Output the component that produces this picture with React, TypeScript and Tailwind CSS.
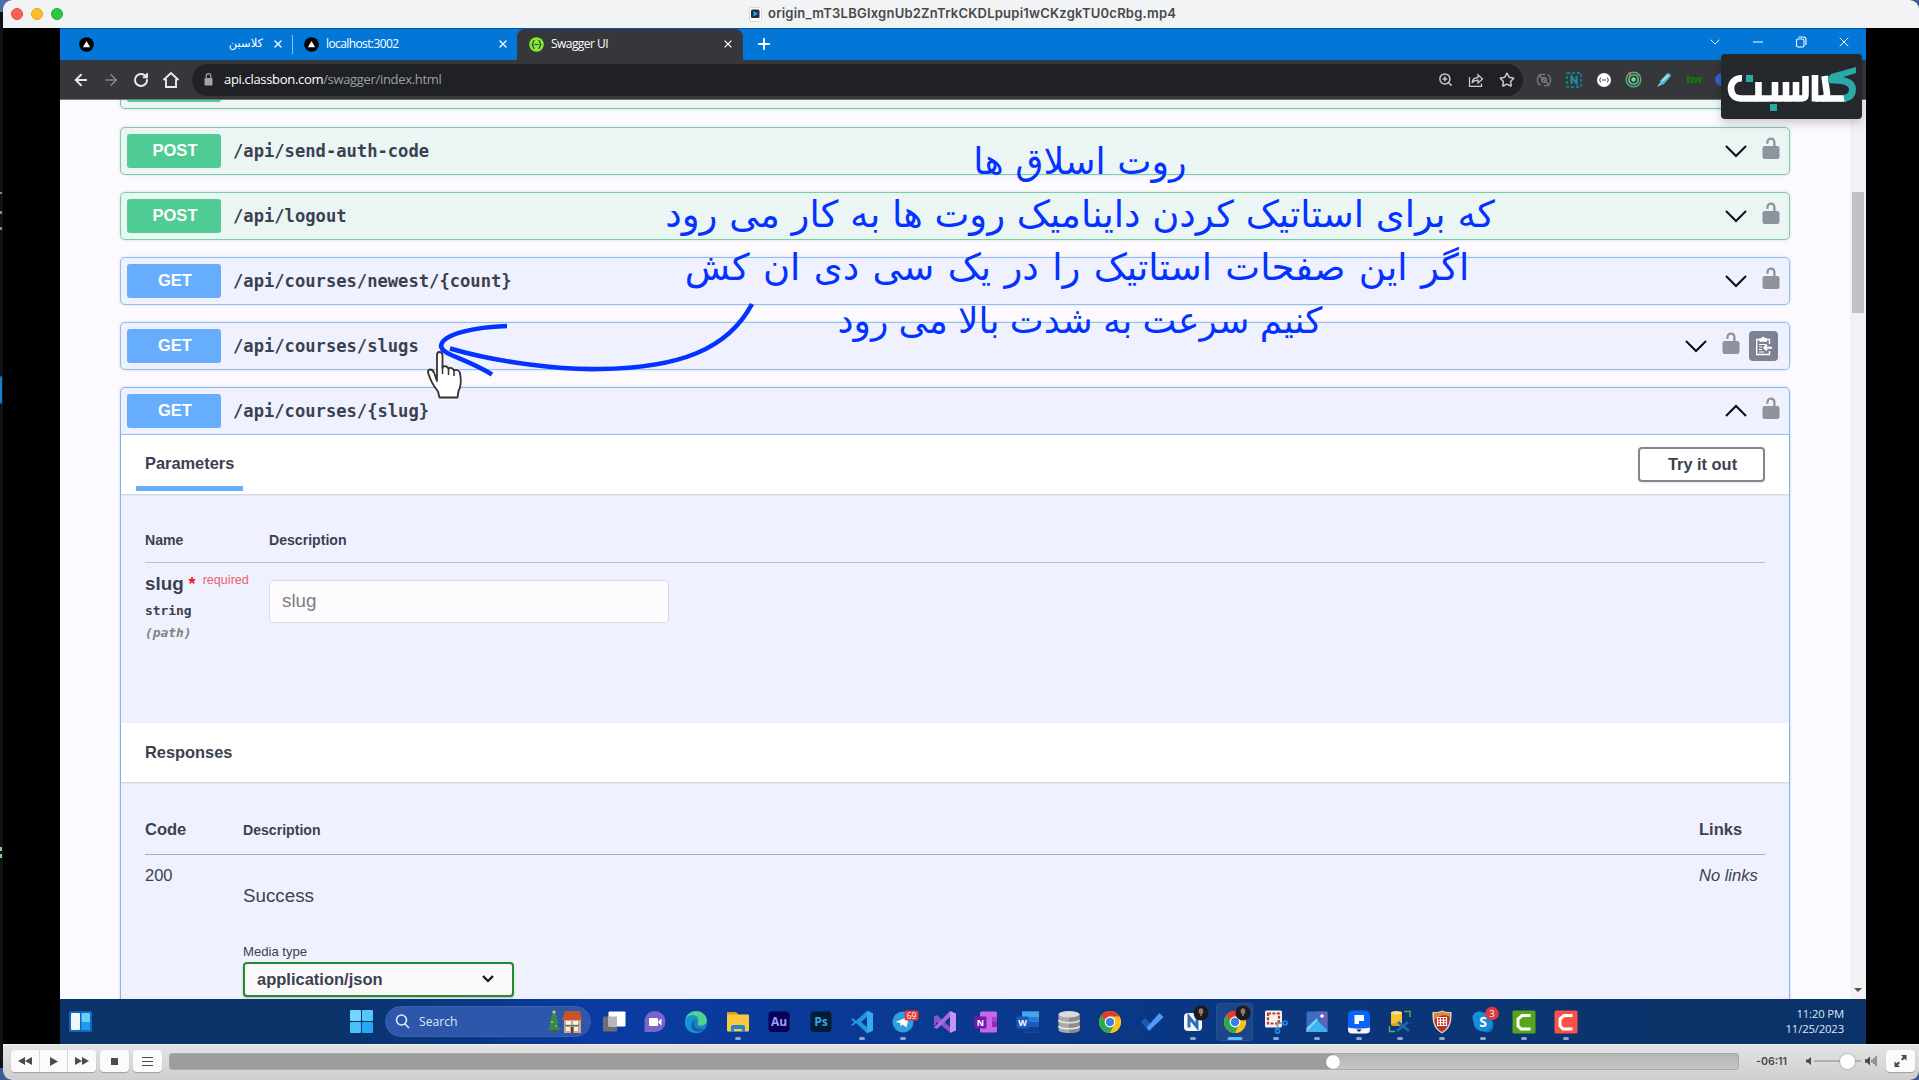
import React from "react";
import {
  ArrowLeft,
  ArrowRight,
  ChevronDown,
  Minus,
  Plus,
  RotateCw,
  Star,
  X,
  ZoomIn,
} from "lucide-react";

/* ---------- small shared drawings ---------- */

function Unlock() {
  return (
    <svg width="18" height="23" viewBox="0 0 18 23">
      <path d="M5.4 6.8C5.1 3.2 6.600 1.600 8.800 1.600c2.400 0 3.600 1.500 3.600 4V10" fill="none" stroke="#8e939c" strokeWidth="2.300" />
      <rect x="0.500" y="9" width="17" height="13" rx="2.200" fill="#8e939c" />
    </svg>
  );
}

function Arrow({ up = false }: { up?: boolean }) {
  return (
    <svg width="22" height="14" viewBox="0 0 22 14" fill="none" stroke="#0b0b12" strokeWidth="2">
      {up ? <path d="M1 12L11 2l10 10" /> : <path d="M1 2l10 10L21 2" />}
    </svg>
  );
}

function VercelMark() {
  return (
    <svg width="15" height="15" viewBox="0 0 15 15" className="shrink-0">
      <circle cx="7.500" cy="7.500" r="7.300" fill="#000" />
      <path d="M7.500 4l3.600 6.300H3.900z" fill="#fff" />
    </svg>
  );
}

/* ---------- browser ---------- */

function TabStrip() {
  return (
    <div className="flex h-8 shrink-0 items-stretch border-t border-[#0055a8] bg-[#0377d8] text-[12px] text-white">
      <div className="flex w-[232px] items-center pb-[1px] pl-[19px]">
        <VercelMark />
        <span className="ml-auto font-['DejaVu_Sans',sans-serif] text-[11.500px]" dir="rtl">كلاسبن</span>
        <X className="mr-[8px] ml-[9px] h-[12px] w-[12px]" strokeWidth={2.600} />
      </div>
      <div className="my-[6px] w-px bg-[#8cc3f0]" />
      <div className="flex max-w-[224px] flex-1 items-center pb-[1px] pl-[11px]">
        <VercelMark />
        <span className="ml-[7px] font-['Open_Sans',sans-serif] tracking-[-0.600px]">localhost:3002</span>
        <X className="mr-[8px] ml-auto h-[12px] w-[12px]" strokeWidth={2.600} />
      </div>
      <div className="flex w-[226px] items-center rounded-t-lg bg-[#36373b] pb-[1px] pl-[12px]">
        <svg width="15" height="15" viewBox="0 0 15 15">
          <circle cx="7.500" cy="7.500" r="7.300" fill="#85ea2d" />
          <path d="M5.500 3.500c-2 0-.8 2.800-2.200 4 1.400 1.200.2 4 2.200 4M9.500 3.500c2 0 .8 2.800 2.200 4-1.400 1.200-.2 4-2.200 4M5.500 7.500h4" fill="none" stroke="#173647" strokeWidth="1.100" />
        </svg>
        <span className="ml-[7px] font-['Open_Sans',sans-serif] tracking-[-0.550px]">Swagger UI</span>
        <X className="mr-[9px] ml-auto h-[12px] w-[12px]" strokeWidth={2.200} />
      </div>
      <Plus className="mb-[1px] ml-[12px] h-[18px] w-[18px] self-center" strokeWidth={2.400} />
      <div className="ml-auto flex items-center gap-[27px] pr-[14px] pb-[6px]">
        <ChevronDown className="h-4 w-4" strokeWidth={1.500} />
        <Minus className="h-4 w-4" strokeWidth={1.500} />
        <svg width="16" height="16" viewBox="0 0 16 16" fill="none" stroke="#fff" strokeWidth="1.100">
          <rect x="3.500" y="5" width="7.500" height="8" rx="1.500" />
          <path d="M5.500 3h5c1.500 0 2.500 1 2.500 2.500V11" />
        </svg>
        <X className="h-4 w-4" strokeWidth={1.500} />
      </div>
    </div>
  );
}

function Toolbar() {
  return (
    <div className="flex h-10 shrink-0 items-center border-b border-[#77757c] bg-[#36373b] text-[#e8eaed]">
      <div className="flex w-[132px] items-center pl-[12px]">
        <ArrowLeft className="h-[18px] w-[18px]" strokeWidth={2.500} />
        <ArrowRight className="ml-[12px] h-[18px] w-[18px] text-[#85878b]" strokeWidth={2} />
        <RotateCw className="ml-[13px] h-[16px] w-[16px]" strokeWidth={3} />
        <svg width="18" height="18" viewBox="0 0 18 18" className="ml-[13px]" fill="none" stroke="currentColor" strokeWidth="1.900">
          <path d="M1.500 9L9 2l7.500 7M4 8v8h10V8" />
        </svg>
      </div>
      <div className="flex h-8 w-[1331px] items-center rounded-full bg-[#202124] pl-[12px]">
        <svg width="9" height="13" viewBox="0 0 9 13">
          <rect x="0.500" y="5" width="8" height="7.500" rx="1" fill="#a0a4aa" />
          <path d="M2.200 5V3a2.300 2.300 0 0 1 4.600 0v2" fill="none" stroke="#a0a4aa" strokeWidth="1.200" />
        </svg>
        <span className="ml-[11px] font-['Open_Sans',sans-serif] text-[13px] tracking-[-0.320px] whitespace-nowrap text-[#9aa0a6]">
          <span className="text-white">api.classbon.com</span>/swagger/index.html
        </span>
        <div className="ml-auto flex items-center gap-[15px] pr-[8px] text-[#c7c9cc]">
          <ZoomIn className="h-[15px] w-[15px]" strokeWidth={2.400} />
          <svg width="16" height="16" viewBox="0 0 16 16" fill="none" stroke="currentColor" strokeWidth="1.300">
            <path d="M1.500 5v9.300h12V11.500M4 11c.5-4 3-5.500 6-5.500V2.700L14.500 7 10 11V8.200c-2.500 0-4.500.6-6 2.800z" />
          </svg>
          <Star className="h-[16px] w-[16px]" strokeWidth={2.200} />
        </div>
      </div>
      <div className="flex items-center gap-[13.800px] pl-[13px]">
        <svg width="16" height="16" viewBox="0 0 16 16" fill="none" stroke="#77797d" strokeWidth="1.400">
          <path d="M4.500 13.500A6.300 6.300 0 0 1 5 2.400h4M11.500 2.500A6.300 6.300 0 0 1 11 13.600H8M2.500 2.500l11 11" />
          <circle cx="8" cy="8" r="2.300" />
        </svg>
        <svg width="16" height="16" viewBox="0 0 16 16" fill="none" stroke="#1493a2">
          <rect x="1" y="1" width="14" height="14" strokeDasharray="3 2" strokeWidth="1.300" />
          <path d="M5.500 12V4.500l5 7V4" strokeWidth="2" />
        </svg>
        <svg width="16" height="16" viewBox="0 0 16 16">
          <circle cx="8" cy="8" r="7" fill="#fff" />
          <path d="M5 5.500L3.500 8 5 10.500M11 5.500L12.500 8 11 10.500M6 8h4" fill="none" stroke="#444" strokeWidth="1" />
        </svg>
        <svg width="17" height="17" viewBox="0 0 17 17" fill="none">
          <circle cx="8.500" cy="8.500" r="7.300" stroke="#46b980" strokeWidth="1.400" />
          <circle cx="8.500" cy="8.500" r="4.700" stroke="#7bd7a2" strokeWidth="1.300" />
          <circle cx="8.500" cy="8.500" r="2.200" fill="#59e2a0" />
          <circle cx="4.500" cy="2.800" r="1.600" fill="#e2663c" />
          <circle cx="12.500" cy="4.500" r="1.200" fill="#c9643f" />
        </svg>
        <svg width="16" height="16" viewBox="0 0 16 16">
          <path d="M1 15l3-4 2 1z" fill="#cfeaf4" />
          <path d="M4 9l7-7.500c2-1 4.500 1 3.500 3L7.500 12.500 4 12z" fill="#56b9de" />
          <path d="M5.500 8.500l6-6 1.500 1-6 6z" fill="#a5e3f5" />
        </svg>
        <span className="w-[17px] font-['DejaVu_Sans',sans-serif] text-[11px] leading-4 font-bold tracking-[-1px] text-[#0d7a0d]">bw</span>
        <div className="-ml-[2px] h-[13px] w-[13px] rounded-full bg-[#2f63c4]" />
      </div>
    </div>
  );
}

/* ---------- swagger page ---------- */

type Route = { method: "POST" | "GET"; path: string; copy?: boolean };

const routes: Route[] = [
  { method: "POST", path: "/api/send-auth-code" },
  { method: "POST", path: "/api/logout" },
  { method: "GET", path: "/api/courses/newest/{count}" },
  { method: "GET", path: "/api/courses/slugs", copy: true },
];

function Summary({ route, open = false }: { route: Route; open?: boolean }) {
  return (
    <div className="flex h-[46px] items-center pl-[6px]">
      <div
        className={
          "flex h-[34px] w-[94px] items-center justify-center rounded-[3px] pb-[1px] pl-[2px] font-['Liberation_Sans',sans-serif] text-[16.500px] font-bold text-white " +
          (route.method === "POST" ? "bg-[#4fcc93]" : "bg-[#66aefd]")
        }
      >
        {route.method}
      </div>
      <span className="ml-[12px] pt-[2px] font-['DejaVu_Sans_Mono',monospace] text-[17.150px] font-bold text-[#3b4151]">
        {route.path}
      </span>
      <div className="ml-auto flex items-center">
        <Arrow up={open} />
        <div className="mr-[9px] ml-[15px] pb-[5px]">
          <Unlock />
        </div>
        {route.copy && (
          <div className="mr-[11px] flex h-[30px] w-[29px] items-center justify-center rounded-[4px] bg-[#7d8293]">
            <svg width="18" height="20" viewBox="0 0 18 20" fill="none" stroke="#fff" strokeWidth="1.400">
              <path d="M14.500 8V3.500H1.700v15h12.800V15M5 5V3h1.700c.3-2 2.500-2 2.800 0h1.800v2z" />
              <path d="M4 8.500h7M4 11h3M4 13.500h3M4 16h5" strokeWidth="1" />
              <path d="M17 11.700H9.500M12 9l-2.800 2.700L12 14.400" strokeWidth="2" />
            </svg>
          </div>
        )}
      </div>
    </div>
  );
}

function SwaggerPage() {
  return (
    <div className="flex h-[899px] shrink-0 overflow-hidden bg-[#fcfafe] font-['Liberation_Sans',sans-serif] text-[#3b4151]">
      <div className="w-[1790px] pl-[60px]">
        <div className="w-[1670px]">
          <div className="h-[9px] rounded-b-[5px] border border-t-0 border-[#6cc9a0] bg-[#ebf6f4] pl-[6px] shadow-[0_0_3px_rgba(0,0,0,0.150)]">
            <div className="h-[2px] w-[94px] rounded-b-[3px] bg-[#4fcc93]" />
          </div>
          <div className="mt-[18px] flex flex-col gap-[17px]">
            {routes.map((r) => (
              <div
                key={r.path}
                className={
                  "rounded-[5px] border shadow-[0_0_3px_rgba(0,0,0,0.150)] " +
                  (r.method === "POST" ? "border-[#77cfa5] bg-[#ebf6f4]" : "border-[#8cbff5] bg-[#eff2fe]")
                }
              >
                <Summary route={r} />
              </div>
            ))}
            <div className="h-[700px] rounded-[5px] border border-[#7fb8f5] bg-[#eff2fe] shadow-[0_0_3px_rgba(0,0,0,0.150)]">
              <Summary route={{ method: "GET", path: "/api/courses/{slug}" }} open />
              <div className="flex h-[60px] items-start justify-between border-t border-[#8cc0f8] bg-white pr-[24px] pl-[15px] shadow-[0_1px_2px_rgba(0,0,0,0.150)]">
                <div className="h-[56px] w-[107px] border-b-[5px] border-[#66aefd] pt-[18px] pl-[9px] text-[16.400px] leading-5 font-bold">
                  Parameters
                </div>
                <div className="mt-[12px] flex h-[35px] w-[127px] items-center justify-center rounded-[4px] border-2 border-[#85868c] pb-[1px] pl-[2px] text-[16.400px] font-bold shadow-[0_1px_2px_rgba(0,0,0,0.100)]">
                  Try it out
                </div>
              </div>
              <div className="h-[229px] px-6 pt-[36px]">
                <div className="flex border-b border-[#bcc0cc] pb-[12px] text-[14.100px] leading-5 font-bold">
                  <div className="w-[124px]">Name</div>
                  <div>Description</div>
                </div>
                <div className="flex">
                  <div className="w-[124px] pt-[9px]">
                    <div className="flex h-6 text-[18.800px] leading-6 font-bold whitespace-nowrap">
                      slug
                      <span className="ml-[5px] text-[18px] leading-6 text-[#f11c1c]">*</span>
                      <span className="ml-[7px] text-[12.600px] leading-[17px] font-normal text-[#f0606a]">required</span>
                    </div>
                    <div className="mt-[5px] font-['DejaVu_Sans_Mono',monospace] text-[12.900px] leading-5 font-bold">string</div>
                    <div className="mt-[2px] font-['DejaVu_Sans_Mono',monospace] text-[12.900px] leading-5 font-bold text-[#808080] italic">(path)</div>
                  </div>
                  <div className="mt-[17px] flex h-[43px] w-[400px] items-center rounded-[4px] border border-[#dadbe5] bg-[#fdfbfe] pl-[12px] text-[18.800px] text-[#7d7d80]">
                    slug
                  </div>
                </div>
              </div>
              <div className="flex h-[59px] items-center bg-white pl-6 text-[16.400px] font-bold shadow-[0_1px_2px_rgba(0,0,0,0.150)]">
                Responses
              </div>
              <div className="px-6 pt-[37px]">
                <div className="flex border-b border-[#a9aebb] pb-[15px] text-[16.500px] leading-5 font-bold">
                  <div className="w-[98px]">Code</div>
                  <div className="pt-[2px] text-[14.100px] leading-[18px]">Description</div>
                  <div className="ml-auto w-[66px]">Links</div>
                </div>
                <div className="flex">
                  <div className="w-[98px] pt-[10px] text-[16.500px] leading-5">200</div>
                  <div className="pt-[29px]">
                    <div className="text-[18.800px] leading-6">Success</div>
                    <div className="mt-[34px] text-[13.100px] leading-5">Media type</div>
                    <div className="flex h-[35px] w-[271px] items-center justify-between rounded-[4px] border-2 border-[#218c2c] bg-[#fbf9fb] pr-[17px] pl-[12px] pb-[1px] text-[16.500px] font-bold shadow-[0_1px_2px_rgba(0,0,0,0.250)]">
                      application/json
                      <svg width="14" height="10" viewBox="0 0 14 10" fill="none" stroke="#111" strokeWidth="2.200">
                        <path d="M2 2l5 5 5-5" />
                      </svg>
                    </div>
                  </div>
                  <div className="ml-auto w-[66px] pt-[10px] text-[16.500px] leading-5 whitespace-nowrap italic">No links</div>
                </div>
              </div>
            </div>
          </div>
        </div>
      </div>
      <div className="flex w-4 flex-col items-center bg-[#f3f1f5]">
        <div className="mt-[92px] h-[121px] w-[12px] bg-[#c3c1c5]" />
        <div className="mt-auto mb-[7px] h-0 w-0 border-x-[4px] border-t-[4px] border-x-transparent border-t-[#555]" />
      </div>
    </div>
  );
}

/* ---------- windows taskbar ---------- */

function Ico({ children }: { children: React.ReactNode }) {
  return (
    <svg width="24" height="24" viewBox="0 0 24 24">
      {children}
    </svg>
  );
}

function Chrome() {
  return (
    <>
      <circle cx="12" cy="12" r="11" fill="#fbc116" />
      <path d="M12 12L2.500 6.500A11 11 0 0 1 21.500 6.500z" fill="#e33b2e" />
      <path d="M12 12L2.500 6.500A11 11 0 0 0 12 23l4.300-8.500z" fill="#2da94f" />
      <path d="M12 6.500h9.500A11 11 0 0 1 12 23l5-9z" fill="#fbc116" />
      <circle cx="12" cy="12" r="5.400" fill="#fff" />
      <circle cx="12" cy="12" r="4.200" fill="#3f7de8" />
    </>
  );
}

function Avatar() {
  return (
    <>
      <circle cx="20" cy="3" r="7.500" fill="#1c1a1d" />
      <ellipse cx="20" cy="1.200" rx="2.300" ry="3" fill="#8f7a73" />
      <path d="M18.800 4.500l1.200 2 1.200-2z" fill="#aaa" />
    </>
  );
}

type TaskbarApp = { icon: React.ReactNode; run?: "idle" | "active" };

const apps: TaskbarApp[] = [
  {
    icon: (
      <>
        <rect x="1" y="6.500" width="14" height="15" rx="1" fill="#6c6d72" />
        <rect x="6.500" y="1.500" width="17" height="15" rx="1" fill="#fff" />
        <rect x="6.500" y="6.500" width="8.500" height="10" fill="#b6b7bb" />
      </>
    ),
  },
  {
    icon: (
      <>
        <path d="M12 1a10.500 10.500 0 0 1 0 21H1.500V12A10.500 10.500 0 0 1 12 1z" fill="#7a63cb" />
        <rect x="6" y="8" width="9" height="8" rx="1" fill="#fff" />
        <path d="M15.500 11l3-2.500v7l-3-2.500z" fill="#fff" />
      </>
    ),
  },
  {
    icon: (
      <>
        <circle cx="12" cy="12" r="11.200" fill="#1b7fd1" />
        <path d="M1.500 9C4 .5 17-2 22 7c3 7-3 9.500-7 8.500-2-.7-1-2-.8-3.500C14 7 6 5.500 1.500 9z" fill="#4fd38c" />
        <path d="M1.500 9C5 3 14 4 14.500 9.500 11 7 8 11 9.500 15c2 5.500 8 6 11.500 3.500C16 26 2 24 1 13z" fill="#1596cf" />
        <path d="M11 10c-4 4 0 11 9.500 9-4 4.500-14 3-13-4 .3-2.500 1.500-4 3.500-5z" fill="#135ba8" />
      </>
    ),
  },
  {
    icon: (
      <>
        <path d="M1 2h9l2 2v6H1z" fill="#e09b10" />
        <rect x="1" y="4.500" width="22" height="17" rx="1" fill="#fdc93c" />
        <path d="M5 22v-5a2 2 0 0 1 2-2h10a2 2 0 0 1 2 2v5h-3v-3H8v3z" fill="#1b8ad2" />
      </>
    ),
    run: "idle",
  },
  {
    icon: (
      <>
        <rect x="1.500" y="1.500" width="21" height="20.500" rx="3.500" fill="#060057" />
        <text x="12" y="16" textAnchor="middle" fontSize="12" fontWeight="700" fontFamily="Open Sans, sans-serif" fill="#a59bf5">Au</text>
      </>
    ),
  },
  {
    icon: (
      <>
        <rect x="1.500" y="1.500" width="21" height="20.500" rx="3.500" fill="#001d34" />
        <text x="12" y="16" textAnchor="middle" fontSize="12" fontWeight="700" fontFamily="Open Sans, sans-serif" fill="#35a5f5">Ps</text>
      </>
    ),
  },
  {
    icon: (
      <>
        <path d="M17 .8L23 3.500v17L17 23.200 6 13l-3.500 3L1 15l3-3-3-3 1.500-1L6 10.800zM17 7l-6 5 6 5z" fill="#2595db" />
        <path d="M17 .8L23 3.500v17l-6 2.700z" fill="#35abf0" />
      </>
    ),
    run: "idle",
  },
  {
    icon: (
      <>
        <circle cx="12" cy="12" r="10.500" fill="#2ba0dc" />
        <path d="M4.500 12L18 6.500l-2.500 11-4-3-2 2-.3-3.500z" fill="#fff" />
        <rect x="13.500" y=".5" width="14" height="10" rx="2" fill="#e53935" />
        <text x="20.500" y="8.500" textAnchor="middle" fontSize="8.500" fontFamily="Open Sans, sans-serif" fill="#fff">69</text>
      </>
    ),
    run: "idle",
  },
  {
    icon: (
      <>
        <path d="M1 6.500l3-1.500L17 17v5.500L4 12 1 17z" fill="#8d54c8" />
        <path d="M1 17.500L17 1v6L4 19z" fill="#a66be0" />
        <path d="M17 1l6 2.500v17L17 23z" fill="#c793f7" />
      </>
    ),
  },
  {
    icon: (
      <>
        <rect x="6" y="1.500" width="17" height="21" rx="1.500" fill="#ca64ea" />
        <path d="M18 7h5v5h-5z" fill="#a93fd0" />
        <path d="M18 12h5v5h-5z" fill="#8d2cb5" />
        <rect x=".5" y="6.500" width="12" height="12" rx="1" fill="#7719aa" />
        <text x="6.500" y="15.700" textAnchor="middle" fontSize="9" fontWeight="700" fontFamily="Open Sans, sans-serif" fill="#fff">N</text>
      </>
    ),
  },
  {
    icon: (
      <>
        <rect x="6" y="1.500" width="17" height="21" rx="1.500" fill="#2b7cd3" />
        <path d="M6 1.500h17V7H6z" fill="#41a5ee" />
        <path d="M6 12h17v5H6z" fill="#185abd" />
        <path d="M6 17h17v5.500H6z" fill="#103f91" />
        <rect x=".5" y="6.500" width="12" height="12" rx="1" fill="#185abd" />
        <text x="6.500" y="15.700" textAnchor="middle" fontSize="9" fontWeight="700" fontFamily="Open Sans, sans-serif" fill="#fff">W</text>
      </>
    ),
  },
  {
    icon: (
      <>
        <path d="M1.500 4v16c0 4 21 4 21 0V4z" fill="#a9a9a9" />
        <path d="M12 4h10.500v16c0 2-5 3-10.500 3z" fill="#8c8c8c" />
        <path d="M1.500 10c1 3.500 20 3.500 21 0M1.500 16c1 3.500 20 3.500 21 0" fill="none" stroke="#e8e8e8" strokeWidth="1.500" />
        <ellipse cx="12" cy="4.200" rx="10.500" ry="3.200" fill="#dcdcdc" />
      </>
    ),
  },
  { icon: <Chrome /> },
  {
    icon: (
      <>
        <path d="M1 12l4-4 7 7-4 5.500z" fill="#195abd" />
        <path d="M7 17L19.500 3 23.500 7 9 21z" fill="#4a9df2" />
      </>
    ),
  },
  {
    icon: (
      <>
        <rect x="3" y="3" width="18" height="18" rx="4" fill="#f4f8fc" />
        <path d="M8 17.500V7l8 10V6.500" fill="none" stroke="#2f6cb3" strokeWidth="3" />
        <Avatar />
      </>
    ),
    run: "idle",
  },
  {
    icon: (
      <>
        <Chrome />
        <Avatar />
      </>
    ),
    run: "active",
  },
  {
    icon: (
      <>
        <rect x="1" y="0.500" width="17" height="17" rx="1.500" fill="#f3f3f5" />
        <rect x="4" y="3.500" width="11" height="10" fill="none" stroke="#c43a28" strokeWidth="2.200" strokeDasharray="3 1.400" />
        <path d="M12 14l8-1.500M14 10l-1 10" stroke="#8c9299" strokeWidth="1.700" />
        <circle cx="21" cy="13" r="2" fill="none" stroke="#1d8fe0" strokeWidth="1.700" />
        <circle cx="13.500" cy="21" r="2" fill="none" stroke="#1d8fe0" strokeWidth="1.700" />
      </>
    ),
    run: "idle",
  },
  {
    icon: (
      <>
        <rect x="1.500" y="1.500" width="21" height="20.500" rx="2" fill="#3d6fc0" />
        <path d="M13 1.500h9.500V20z" fill="#6a61b5" />
        <path d="M1.500 20.500l10-11 11 11V22h-21z" fill="#3fb2f0" />
        <path d="M1.500 22L13 10l-1.500-1.500L1.500 18z" fill="#7cd4fa" />
        <circle cx="17" cy="6" r="1.800" fill="#fff" />
      </>
    ),
    run: "idle",
  },
  {
    icon: (
      <>
        <rect x="1" y="0.500" width="22" height="23" rx="4.500" fill="#0a63fb" />
        <path d="M1 17.500c6 1.500 16 1.500 22 0v2a4 4 0 0 1-4 4H5a4 4 0 0 1-4-4z" fill="#f4f6fa" />
        <path d="M7.500 5h9.500v6h-5v3H7.500z" fill="#fff" />
        <path d="M9.500 19.500h5l-1.500 2h-2z" fill="#222" />
      </>
    ),
    run: "idle",
  },
  {
    icon: (
      <>
        <path d="M3 2.500h11v12H3z" fill="#f2c230" />
        <ellipse cx="8.500" cy="2.800" rx="5.500" ry="1.800" fill="#fbe28a" />
        <ellipse cx="8.500" cy="14.500" rx="5.500" ry="1.500" fill="#dba717" />
        <path d="M16 1.500h6V7M1.500 16v5.500H7" fill="none" stroke="#59a55a" strokeWidth="1.600" />
        <path d="M9 21l11-9M10 12l11 9" stroke="#1b68ae" strokeWidth="2.600" />
      </>
    ),
    run: "idle",
  },
  {
    icon: (
      <>
        <path d="M12 0.500c3 1.500 6.500 1.700 9.500 1.500.5 11-2 17.500-9.500 21.500C4.500 19.500 2 13 2.500 2 5.500 2.200 9 2 12 .5z" fill="#d8d3cd" />
        <path d="M12 2c2.500 1.200 5.500 1.500 8 1.400C20.300 13 18 18.500 12 22 6 18.500 3.700 13 4 3.400 6.500 3.500 9.500 3.200 12 2z" fill="#bd2f25" />
        <path d="M4 3.400C6.500 3.500 9.500 3.200 12 2c2.500 1.200 5.500 1.500 8 1.400V7C15 4 9 5 4 10z" fill="#e9862e" />
        <path d="M7.500 7.500h9v8h-9zM10.500 7.500v8M13.500 7.500v8M7.500 10.200h9M7.500 12.800h9" fill="none" stroke="#fff" strokeWidth="1.100" />
      </>
    ),
    run: "idle",
  },
  {
    icon: (
      <>
        <circle cx="8" cy="8" r="6.500" fill="#1593dd" />
        <circle cx="16" cy="16" r="6.500" fill="#1173c4" />
        <circle cx="12" cy="12" r="9.500" fill="#168bd8" />
        <text x="12" y="17" textAnchor="middle" fontSize="14" fontWeight="700" fontFamily="Open Sans, sans-serif" fill="#fff">S</text>
        <circle cx="21" cy="3.500" r="6.800" fill="#dc3b40" />
        <text x="21" y="7" textAnchor="middle" fontSize="9.500" fontFamily="Open Sans, sans-serif" fill="#fff">3</text>
      </>
    ),
    run: "idle",
  },
  {
    icon: (
      <>
        <rect x=".5" y=".5" width="23" height="23" rx="1.500" fill="#55a619" />
        <path d="M18.500 5.500H10L6 9v7l3 3h9.500" fill="none" stroke="#fff" strokeWidth="3" />
      </>
    ),
    run: "idle",
  },
  {
    icon: (
      <>
        <rect x=".5" y=".5" width="23" height="23" rx="1.500" fill="#fb5149" />
        <path d="M18.500 5.500H10L6 9v7l3 3h9.500" fill="none" stroke="#fff" strokeWidth="3" />
      </>
    ),
    run: "idle",
  },
];

function Taskbar() {
  return (
    <div className="flex h-[45px] shrink-0 items-center bg-linear-to-r from-[#0b3369] from-15% via-[#0a3ba2] via-30% to-[#0b3369] to-90% font-['Open_Sans',sans-serif]">
      <svg width="23" height="21" viewBox="0 0 23 21" className="ml-[9px]">
        <rect width="23" height="21" rx="1.500" fill="#1267ba" />
        <rect x="2" y="2" width="9" height="17" rx="1" fill="#f1f6fb" />
        <rect x="12.500" y="2" width="8.500" height="9" fill="#69cff9" />
        <rect x="12.500" y="11" width="8.500" height="8" fill="#1f9cf0" />
      </svg>
      <svg width="23" height="23" viewBox="0 0 23 23" className="ml-[258px]">
        <rect width="11" height="11" rx="1" fill="#74d4fb" />
        <rect x="12" width="11" height="11" rx="1" fill="#55c8fb" />
        <rect y="12" width="11" height="11" rx="1" fill="#49c0fa" />
        <rect x="12" y="12" width="11" height="11" rx="1" fill="#27a8f5" />
      </svg>
      <div className="ml-[12px] flex h-[31px] w-[206px] items-center rounded-full border border-[#3a63af] bg-[#2c57ab] pl-[9px]">
        <svg width="15" height="15" viewBox="0 0 15 15" fill="none" stroke="#e4ebf7" strokeWidth="1.600">
          <circle cx="6.500" cy="6" r="5" />
          <path d="M10 10l4 4" />
        </svg>
        <span className="ml-[9px] pt-[1px] text-[12.200px] text-[#dfe6f3]">Search</span>
        <svg width="34" height="23" viewBox="0 0 34 23" className="ml-auto mr-[8px]">
          <path d="M6 1l3.500 6H8l3 6H9l3 7H0l3-7H1l3-6H2.500z" fill="#2d8d4d" />
          <path d="M4.500 20h3v2.500h-3z" fill="#7b4a2c" />
          <circle cx="6" cy="2" r="1.500" fill="#f5d443" />
          <circle cx="4" cy="12" r="1" fill="#f5b443" />
          <circle cx="8" cy="16" r="1" fill="#f08b4b" />
          <path d="M16 9h17v14H16z" fill="#d9a18e" />
          <path d="M17 1h15l2 9H14z" fill="#c4562b" />
          <path d="M18 11h5v4h-5zM25 11h5v4h-5zM18 17h4v4h-4zM26 17h4v4h-4z" fill="#f6f1ea" />
          <path d="M17 15.500h14" stroke="#40824b" strokeWidth="1.300" />
          <path d="M23 17h2.500v6H23z" fill="#6c3b2e" />
        </svg>
      </div>
      <div className="ml-[2px] flex">
        {apps.map((a, i) => (
          <div key={i} className="relative flex h-[38px] w-[41.400px] items-center justify-center">
            {a.run === "active" && <div className="absolute inset-x-[2px] inset-y-0 rounded-[4px] border border-white/5 bg-white/8" />}
            <div className="relative [&>svg]:overflow-visible">
              <Ico>{a.icon}</Ico>
            </div>
            {a.run && (
              <div
                className={
                  "absolute bottom-px left-1/2 h-[3px] -translate-x-1/2 rounded-full " +
                  (a.run === "active" ? "w-[15px] bg-[#58bff8]" : "w-[6px] bg-[#8fa6cf]")
                }
              />
            )}
          </div>
        ))}
      </div>
      <div className="mr-[22px] mb-[1px] ml-auto text-right text-[11.300px] leading-[15px] tracking-[-0.150px] text-[#dce6f5]">
        <div>11:20 PM</div>
        <div>11/25/2023</div>
      </div>
    </div>
  );
}

/* ---------- player chrome ---------- */

function PlayerControls() {
  const key = "flex h-[22px] items-center justify-center bg-[#fbfbfb]";
  return (
    <div className="flex h-9 shrink-0 items-center border-t border-[#f0f0f0] bg-linear-to-b from-[#e3e3e3] to-[#cfcfcf] pb-[3px] pl-[8px]">
      <div className="flex overflow-hidden rounded-[4px] shadow-[0_1px_1px_rgba(0,0,0,0.250)]">
        <div className={key + " w-[29px] border-r border-[#d6d6d6]"}>
          <svg width="14" height="8" viewBox="0 0 14 8" fill="#4b4b4b"><path d="M7 0v8L0 4zM14 0v8L7 4z" /></svg>
        </div>
        <div className={key + " w-[28px] border-r border-[#d6d6d6]"}>
          <svg width="8" height="9" viewBox="0 0 8 9" fill="#4b4b4b"><path d="M0 0v9l8-4.500z" /></svg>
        </div>
        <div className={key + " w-[28px]"}>
          <svg width="14" height="8" viewBox="0 0 14 8" fill="#4b4b4b"><path d="M0 0v8l7-4zM7 0v8l7-4z" /></svg>
        </div>
      </div>
      <div className={key + " ml-[4px] w-[29px] rounded-[4px] shadow-[0_1px_1px_rgba(0,0,0,0.250)]"}>
        <div className="h-[7px] w-[7px] bg-[#4b4b4b]" />
      </div>
      <div className={key + " ml-[4px] w-[29px] flex-col gap-[3px] rounded-[4px] shadow-[0_1px_1px_rgba(0,0,0,0.250)]"}>
        <div className="h-px w-[11px] bg-[#4b4b4b]" />
        <div className="h-px w-[11px] bg-[#4b4b4b]" />
        <div className="h-px w-[11px] bg-[#4b4b4b]" />
      </div>
      <div className="relative mt-[1px] ml-[7px] h-[17px] w-[1570px] overflow-hidden rounded-[3px] border border-[#aaaaaa] bg-linear-to-b from-[#b5b5b5] to-[#c6c6c6]">
        <div className="h-full w-[1164px] bg-[#9d9d9d]" />
        <div className="absolute top-[0.500px] left-[1156px] h-[14px] w-[14px] rounded-full bg-white shadow-[0_0_1px_rgba(0,0,0,0.400)]" />
      </div>
      <span className="ml-[17px] w-[46px] pt-[1px] font-['Inter',sans-serif] text-[10.600px] font-semibold text-[#4a4a4a]">-06:11</span>
      <svg width="8" height="8" viewBox="0 0 8 8" fill="#4b4b4b" className="ml-[3px]"><path d="M1 2.500h2L6 0v8L3 5.500H1z" /></svg>
      <div className="relative ml-[1px] h-[2px] w-[47px] bg-[#b0b0b0]">
        <div className="absolute -top-[6.500px] left-[26px] h-[15px] w-[15px] rounded-full bg-white shadow-[0_0_2px_rgba(0,0,0,0.400)]" />
      </div>
      <svg width="12" height="10" viewBox="0 0 12 10" className="ml-[4px]" fill="#4b4b4b">
        <path d="M0 3.200h2L5 .5v9L2 6.800H0z" />
        <path d="M7 3.500v3M9 2v6M11 0v10" stroke="#4b4b4b" strokeWidth="1" />
      </svg>
      <div className={key + " ml-[9px] w-[29px] rounded-[4px] shadow-[0_1px_1px_rgba(0,0,0,0.250)]"}>
        <svg width="13" height="12" viewBox="0 0 13 12" fill="#4b4b4b">
          <path d="M7 0h5.500v5.500L10.500 3.700 8.500 5.500 7 4l2-2zM6 12H.5V6.500l2 1.800 2-1.800L6 8l-2 2z" />
        </svg>
      </div>
    </div>
  );
}

/* ---------- overlays on the video ---------- */

function Annotation() {
  return (
    <>
      <div
        dir="rtl"
        className="absolute top-[135px] left-[639px] flex w-[882px] flex-col items-center font-['DejaVu_Sans',sans-serif] text-[37px] leading-[53px] whitespace-nowrap text-[#0433ff]"
      >
        <div className="text-[36.400px]">روت اسلاق ها</div>
        <div>که برای استاتیک کردن داینامیک روت ها به کار می رود</div>
        <div className="pr-[6px] [word-spacing:1.600px]">اگر این صفحات استاتیک را در یک سی دی ان کش</div>
        <div className="text-[36px] [word-spacing:-1.200px]">کنیم سرعت به شدت بالا می رود</div>
      </div>
      <svg className="absolute top-[340px] left-[420px]" width="60" height="66" viewBox="420 340 60 66">
        <path
          d="M437 381v-26c0-4 5-4 5.500 0v13c1-3 5.500-2 6 1 1.500-2 5-1 5.500 1.500 2-1.500 5.500 0 6 2.500 1.500 8 1.500 13-1.500 18l-1 6.500h-18l-1.500-6c-4-5-8-12-10-19 0-4 4-4 6 0z"
          fill="#fff"
          stroke="#333"
          strokeWidth="1.800"
          strokeLinejoin="round"
        />
        <path d="M442.500 365v9M448.500 369v6M454 371v5" stroke="#333" strokeWidth="1.500" />
      </svg>
      <svg className="absolute top-[296px] left-[430px]" width="340" height="86" viewBox="430 296 340 86" fill="none" stroke="#0433ff" strokeWidth="4.600">
        <path d="M507 326C475 327 442 334 441 346c1 9 22 11 51 28.500" />
        <path d="M450 348.500C500 363 562 370 600 369c80-1 128-20 152-65" />
      </svg>
    </>
  );
}

function BrandBadge() {
  return (
    <div className="absolute top-[54px] left-[1721px] h-[65px] w-[141px] rounded-[4px] bg-[#25292e] shadow-[0_4px_10px_rgba(0,0,0,0.200)]">
      <svg width="141" height="65" viewBox="0 0 141 65" fill="none" strokeWidth="6.600">
        <path d="M21 24.300C13.500 24 10 29 10 34.500c0 6.500 4 10 10 10h13c3.500 0 4.500-2 4.500-5V28" stroke="#fff" />
        <path d="M34 44.500h16c3 0 4-1.500 4-4V28M53 44.500h8c3 0 4-1.500 4-4V28M63 44.500h8c3 0 4-1.500 4-4V28M73 44.500h7c3 0 4.500-1.500 4.500-4V22" stroke="#fff" />
        <path d="M94 21v26.500" stroke="#fff" />
        <path d="M94 44.500h6c4 0 6-1.500 6-4.500l-2.500-18" stroke="#fff" />
        <path d="M101 44.500h24" stroke="#fff" />
        <path d="M107 25.500l13 1c8 1 11.500 4.500 11.500 9 0 4.500-2.500 8-8.500 9" stroke="#2aa9a6" strokeWidth="7" />
        <path d="M106 25l4-5 25-7v6l-22 7z" fill="#2aa9a6" />
        <path d="M25 21h7v7h-7zM49 50h7v7h-7z" fill="#2aa9a6" />
      </svg>
    </div>
  );
}

export default function App() {
  return (
    <div className="relative h-[1080px] w-[1919px] overflow-hidden bg-[#101112] pl-[3px]">
      <div className="absolute top-0 left-0 h-[12px] w-[14px] bg-[#4a6fa8]" />
      <div className="absolute right-0 bottom-0 h-[12px] w-[14px] bg-[#3c5c96]" />
      <div className="absolute top-0 right-0 h-[8px] w-[8px] bg-[#3c5c96]" />
      <div className="absolute bottom-0 left-0 h-[12px] w-[14px] bg-[#3c5c96]" />
      <div className="absolute top-[192px] left-0 h-[2px] w-[2px] bg-[#888]" />
      <div className="absolute top-[211px] left-0 h-[3px] w-[2px] bg-[#b07a60]" />
      <div className="absolute top-[227px] left-0 h-[3px] w-[2px] bg-[#b07a60]" />
      <div className="absolute top-[376px] left-0 h-[28px] w-[2px] rounded-l-full bg-[#1580d0]" />
      <div className="absolute top-[847px] left-0 h-[4px] w-[2px] bg-[#7fd08a]" />
      <div className="absolute top-[854px] left-0 h-[4px] w-[2px] bg-[#7fd08a]" />

      <div className="relative flex h-[1080px] flex-col overflow-hidden rounded-[9px] bg-black">
        <div className="flex h-7 shrink-0 items-center bg-[#f2f3f5] pl-[8px]">
          <div className="flex w-[738px] gap-2">
            <div className="h-3 w-3 rounded-full border border-[#e24b41] bg-[#fe5f57]" />
            <div className="h-3 w-3 rounded-full border border-[#e1a325] bg-[#febc2e]" />
            <div className="h-3 w-3 rounded-full border border-[#1dad2b] bg-[#28c840]" />
          </div>
          <svg width="13" height="15" viewBox="0 0 13 15">
            <rect x=".5" y=".5" width="12" height="14" rx="1.500" fill="#fff" stroke="#d9d9d9" />
            <rect x="2" y="2.500" width="8.500" height="8.500" rx="1.500" fill="#23303c" />
            <path d="M4.500 4v5.500L9 6.700z" fill="#28a7f0" />
          </svg>
          <span className="ml-[6px] font-['Inter',sans-serif] text-[13px] font-semibold tracking-[0.230px] whitespace-nowrap text-[#47484a]">
            origin_mT3LBGIxgnUb2ZnTrkCKDLpupi1wCKzgkTU0cRbg.mp4
          </span>
        </div>
        <div className="ml-[57px] flex w-[1806px] flex-1 flex-col">
          <TabStrip />
          <Toolbar />
          <SwaggerPage />
          <Taskbar />
        </div>
        <PlayerControls />
      </div>

      <Annotation />
      <BrandBadge />
    </div>
  );
}
